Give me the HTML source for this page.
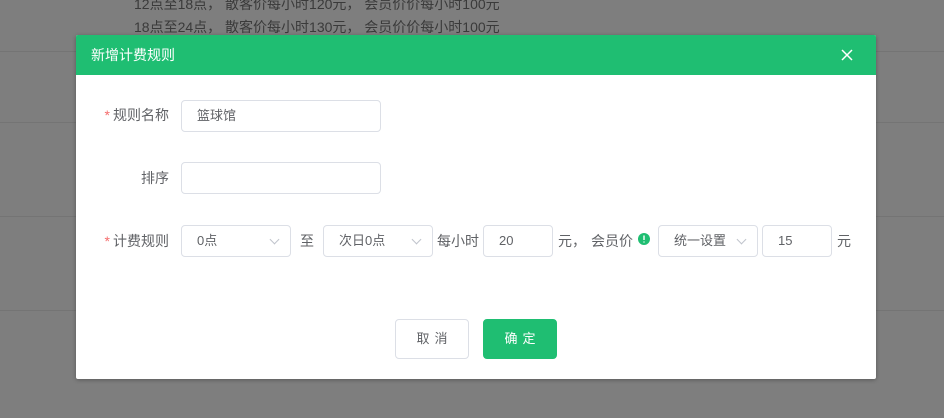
<!DOCTYPE html>
<html><head><meta charset="utf-8"><style>
*{box-sizing:border-box;margin:0;padding:0}
body{width:944px;height:418px;background:#7e7e7e;position:relative;overflow:hidden;font-family:"Liberation Sans","Noto Sans CJK SC",sans-serif;font-size:13px;color:#606266}
.hl{position:absolute;left:0;width:944px;height:1px;background:#747474}
.bg{position:absolute;left:134px;color:#3a3a3a;font-size:14px;line-height:20px}
.modal{position:absolute;left:76px;top:35px;width:800px;height:344px;background:#fff;box-shadow:0 1px 4px rgba(0,0,0,.3);border-radius:2px}
.hd{height:40px;background:#1fbe72;color:#fff;font-size:14px;line-height:40px;padding-left:15px;border-radius:2px 2px 0 0}
.x{position:absolute;right:22px;top:13px;width:14px;height:14px}
.lb{position:absolute;text-align:right;width:93px;font-size:14px;color:#606266;line-height:32px}
.lb i{color:#f56c6c;font-style:normal;margin-right:3px}
.in{position:absolute;height:32px;border:1px solid #dcdfe6;border-radius:4px;line-height:30px;padding-left:15px;color:#606266;font-size:13px}
.ar{position:absolute;right:12px;top:10px;width:7px;height:7px;border-right:1px solid #c0c4cc;border-bottom:1px solid #c0c4cc;transform:rotate(45deg)}
.t{position:absolute;line-height:32px;font-size:14px;color:#606266}
.btn{position:absolute;top:284px;height:40px;width:74px;border-radius:4px;text-align:center;line-height:38px;font-size:13px;letter-spacing:5px;text-indent:5px}
</style></head><body>
<div class="bg" style="top:-6px">12点至18点， 散客价每小时120元， 会员价价每小时100元</div>
<div class="bg" style="top:17px">18点至24点， 散客价每小时130元， 会员价价每小时100元</div>
<div class="hl" style="top:51px"></div>
<div class="hl" style="top:122px"></div>
<div class="hl" style="top:216px"></div>
<div class="hl" style="top:310px"></div>
<div class="modal">
<div class="hd">新增计费规则</div>
<svg class="x" viewBox="0 0 14 14"><path d="M2 2L12 12M12 2L2 12" stroke="#fff" stroke-width="1.5"/></svg>
<div class="lb" style="left:0;top:64px"><i>*</i>规则名称</div>
<div class="in" style="left:105px;top:65px;width:200px">篮球馆</div>
<div class="lb" style="left:0;top:127px">排序</div>
<div class="in" style="left:105px;top:127px;width:200px"></div>
<div class="lb" style="left:0;top:190px"><i>*</i>计费规则</div>
<div class="in" style="left:105px;top:190px;width:110px">0点<span class="ar"></span></div>
<div class="t" style="left:224px;top:190px">至</div>
<div class="in" style="left:247px;top:190px;width:110px">次日0点<span class="ar"></span></div>
<div class="t" style="left:361px;top:190px">每小时</div>
<div class="in" style="left:407px;top:190px;width:70px">20</div>
<div class="t" style="left:482px;top:190px">元，</div>
<div class="t" style="left:515px;top:190px">会员价</div>
<svg style="position:absolute;left:562px;top:198px" width="12" height="12" viewBox="0 0 12 12"><circle cx="6" cy="6" r="6" fill="#1fbe72"/><path d="M6 2.5V7M6 8.5V9.5" stroke="#fff" stroke-width="1.4"/></svg>
<div class="in" style="left:582px;top:190px;width:100px">统一设置<span class="ar"></span></div>
<div class="in" style="left:686px;top:190px;width:70px">15</div>
<div class="t" style="left:761px;top:190px">元</div>
<div class="btn" style="left:319px;border:1px solid #dcdfe6;color:#606266">取消</div>
<div class="btn" style="left:407px;background:#1fbe72;color:#fff;border:1px solid #1fbe72">确定</div>
</div>
</body></html>
